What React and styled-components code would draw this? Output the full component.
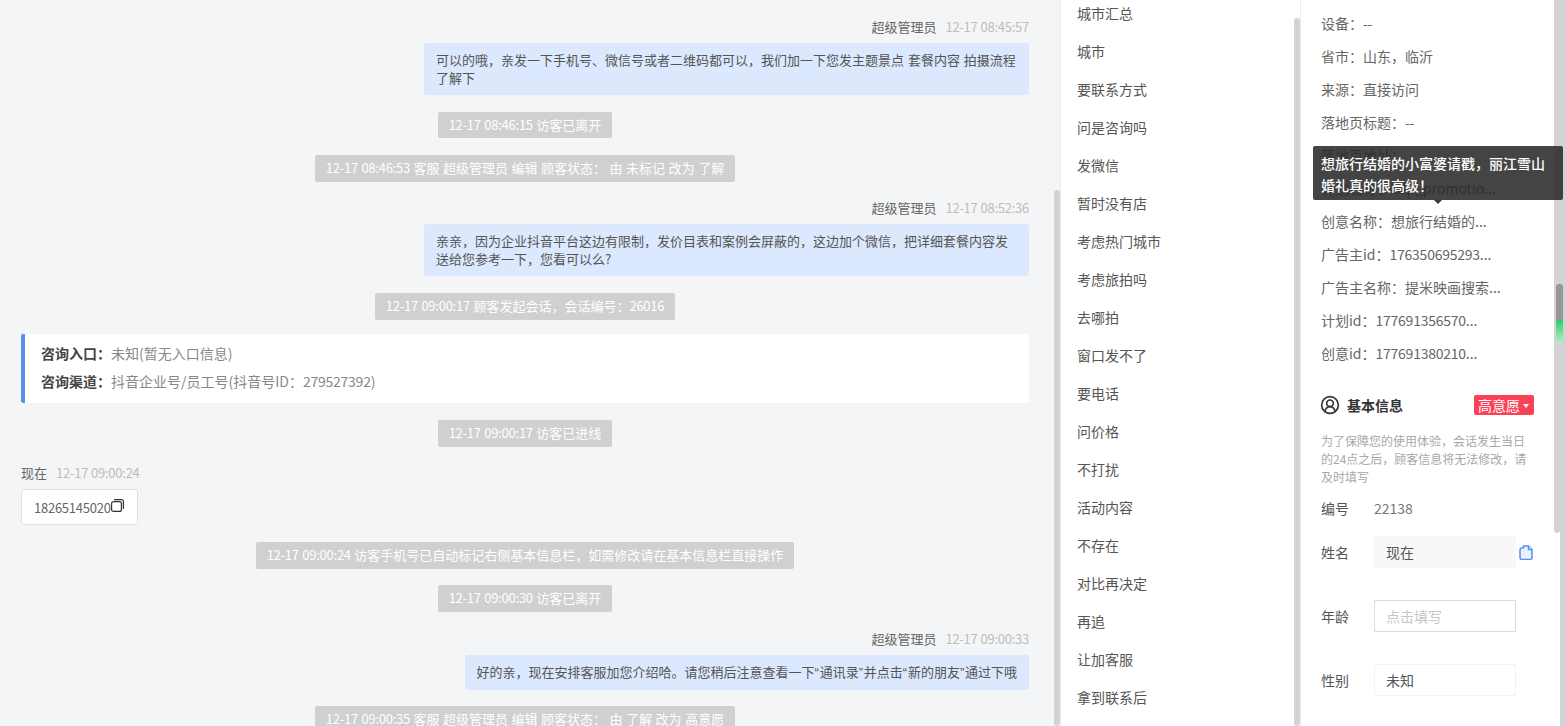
import React from "react";
import styled, { createGlobalStyle } from "styled-components";
import { CircleUserRound } from "lucide-react";

const GlobalStyle = createGlobalStyle`
    html, body {
        margin: 0;
        height: 100%;
        overflow: hidden;
        background: #fff;
    }
    body {
        font-family: "Noto Sans CJK SC", "Noto Sans", sans-serif;
        font-size: 13px;
        color: #555;
    }
`

const Page = styled.div`
    position: relative;
    display: flex;
    width: 1566px;
    height: 726px;
    overflow: hidden;
`

const Num = styled.span`
    letter-spacing: -0.25px;
`

const Quote = styled.span`
    font-family: "Liberation Sans", sans-serif;
    letter-spacing: 0.75px;
`

const ScrollTrack = styled.div`
    flex: none;
    width: 6px;
    height: 100%;
    padding-top: ${p => p.$top}px;
    box-sizing: border-box;
    background: ${p => p.$bg || "transparent"};
`

const ScrollThumb = styled.div`
    height: ${p => p.$height ? `${p.$height}px` : "100%"};
    background: #d3d3d3;
    border-radius: ${p => p.$radius || "3px"};
`

/* chat */
const Chat = styled.div`
    flex: none;
    width: 1054px;
    height: 100%;
    box-sizing: border-box;
    padding: 17px 25px 0 21px;
    overflow: hidden;
    background: #f4f5f7;
    display: flex;
    flex-direction: column;
    gap: 16.75px;

    & > * {
        flex: none;
    }
`

const Group = styled.div`
    margin-top: 1px;
    display: flex;
    flex-direction: column;
    align-items: ${p => p.$left ? "flex-start" : "flex-end"};
    gap: 7px;
`

const Meta = styled.div`
    display: flex;
    gap: 9px;
    height: 18px;
    line-height: 18px;
    color: #666;
`

const Time = styled.span`
    color: #bdbdbd;
`

const Bubble = styled.div`
    max-width: 605px;
    box-sizing: border-box;
    padding: 8px 12px;
    line-height: 18px;
    word-spacing: 1px;
    background: #dbe8fd;
    border-radius: 3px;
    color: #555;
`

const Notice = styled.div`
    align-self: center;
    height: 26.5px;
    line-height: 26.5px;
    padding: 0 11px;
    background: #d0d0d0;
    border-radius: 2px;
    color: #fff;
    word-spacing: 0.6px;
    white-space: nowrap;
`

const SourceCard = styled.div`
    height: 69px;
    margin-top: -2px;
    box-sizing: border-box;
    padding: 2px 16px 6px;
    background: #fff;
    border-left: 4px solid #5590ea;
    border-radius: 2px;
    display: flex;
    flex-direction: column;
    justify-content: center;
    gap: 10px;
    font-size: 14px;
    line-height: 18px;
    color: #888;
`

const SourceLabel = styled.b`
    font-weight: 700;
    color: #444;
`

const PhoneBox = styled.div`
    display: flex;
    align-items: center;
    height: 36px;
    width: 117px;
    box-sizing: border-box;
    padding-left: 12px;
    background: #fff;
    border: 1px solid #dcdfe6;
    border-radius: 3px;
    color: #666;
`

const PhoneCopy = styled.svg`
    width: 13px;
    height: 13px;
    margin-top: -3px;
    fill: none;
    stroke: #333;
    stroke-width: 1.2;
`

/* quick replies */
const Divider = styled.div`
    flex: none;
    width: 1px;
    background: #ececec;
`

const ReplyList = styled.div`
    flex: none;
    width: 233px;
    margin-top: -6px;
    padding-left: 16px;
    box-sizing: border-box;
    background: #fff;
`

const ReplyItem = styled.div`
    height: 38px;
    line-height: 38px;
    font-size: 14px;
    color: #555;
`

/* customer info */
const Info = styled.div`
    flex: none;
    width: 253px;
    height: 100%;
    box-sizing: border-box;
    padding: 7px 20px 0;
    background: #fff;
    font-size: 14px;
`

const InfoRow = styled.div`
    height: 33px;
    line-height: 33px;
    white-space: nowrap;
    color: #666;
`

const SectionHead = styled.div`
    display: flex;
    align-items: center;
    height: 20px;
    margin-top: 25px;
`

const SectionIcon = styled(CircleUserRound)`
    flex: none;
    margin-left: -1px;
`

const SectionTitle = styled.div`
    flex: 1;
    margin-left: 7px;
    font-weight: 700;
    color: #333;
`

const IntentChip = styled.div`
    display: flex;
    align-items: center;
    gap: 3px;
    height: 20px;
    padding: 0 5px 0 4px;
    background: #fb4155;
    border-radius: 2px;
    color: #fff;
`

const Caret = styled.span`
    width: 0;
    height: 0;
    margin-top: 1px;
    border: 3px solid transparent;
    border-top: 4px solid #fff;
    border-bottom: 0;
`

const Hint = styled.div`
    margin-top: 17px;
    width: 213px;
    font-size: 12px;
    line-height: 18px;
    color: #a8a8a8;
`

const Field = styled.div`
    display: flex;
    align-items: center;
    height: 32px;
    margin-top: ${p => p.$gap}px;
`

const FieldLabel = styled.div`
    flex: none;
    width: 53px;
    color: #555;
`

const FieldValue = styled.div`
    color: #777;
`

const FieldBox = styled.div`
    flex: none;
    width: 142px;
    height: 32px;
    line-height: 30px;
    box-sizing: border-box;
    padding-left: 11px;
    border: 1px solid ${p => p.$line};
    background: ${p => p.$bg || "#fff"};
    color: ${p => p.$muted ? "#c6c6c6" : "#555"};
`

const DocCopy = styled.svg`
    flex: none;
    width: 14px;
    height: 15px;
    margin-left: 3px;
    fill: #eaf1fd;
    stroke: #5590ea;
    stroke-width: 1.5;
`

/* overlays */
const Tooltip = styled.div`
    position: absolute;
    left: 1313px;
    top: 146px;
    width: 250px;
    height: 54px;
    box-sizing: border-box;
    padding: 5.5px 8px;
    background: rgba(40, 40, 40, 0.87);
    border-radius: 2px;
    font-size: 14px;
    font-weight: 500;
    line-height: 22px;
    color: #fff;

    &::after {
        content: "";
        position: absolute;
        left: 121px;
        bottom: -4px;
        border: 4px solid transparent;
        border-top: 4px solid #3a3a3a;
        border-bottom: 0;
    }
`

const MiniThumb = styled.div`
    position: absolute;
    left: 1556px;
    top: 284px;
    width: 7px;
    height: 59px;
    border-radius: 3px;
    background: linear-gradient(#979797 0, #979797 36px, #2ecb6b 36px, #b6eec9 100%);
`

const replies = ["城市汇总", "城市", "要联系方式", "问是咨询吗", "发微信", "暂时没有店", "考虑热门城市", "考虑旅拍吗", "去哪拍", "窗口发不了", "要电话", "问价格", "不打扰", "活动内容", "不存在", "对比再决定", "再追", "让加客服", "拿到联系后"];

const details = ["设备：--", "省市：山东，临沂", "来源：直接访问", "落地页标题：--", "落地页地址：", "计划名称：cdp_promotio...", "创意名称：想旅行结婚的...", "广告主id：176350695293...", "广告主名称：提米映画搜索...", "计划id：177691356570...", "创意id：177691380210..."];

// digits and curly quotes run narrower than the CJK font gives them
function Txt({ children }) {
    return children.split(/([\d:-]+|[“”])/).map((part, i) => {
        if (i % 2 === 0) return part;
        return /[“”]/.test(part) ? <Quote key={i}>{part}</Quote> : <Num key={i}>{part}</Num>;
    });
}

function Sent({ time, children }) {
    return (
        <Group>
            <Meta>超级管理员<Time><Txt>{time}</Txt></Time></Meta>
            <Bubble><Txt>{children}</Txt></Bubble>
        </Group>
    );
}

function App() {
    return (
        <Page>
            <GlobalStyle />
            <Chat>
                <Sent time="12-17 08:45:57">可以的哦，亲发一下手机号、微信号或者二维码都可以，我们加一下您发主题景点 套餐内容 拍摄流程了解下</Sent>
                <Notice><Txt>12-17 08:46:15 访客已离开</Txt></Notice>
                <Notice><Txt>12-17 08:46:53 客服 超级管理员 编辑 顾客状态： 由 未标记 改为 了解</Txt></Notice>
                <Sent time="12-17 08:52:36">亲亲，因为企业抖音平台这边有限制，发价目表和案例会屏蔽的，这边加个微信，把详细套餐内容发送给您参考一下，您看可以么?</Sent>
                <Notice><Txt>12-17 09:00:17 顾客发起会话，会话编号：26016</Txt></Notice>
                <SourceCard>
                    <div><SourceLabel>咨询入口：</SourceLabel>未知(暂无入口信息)</div>
                    <div><SourceLabel>咨询渠道：</SourceLabel><Txt>抖音企业号/员工号(抖音号ID：279527392)</Txt></div>
                </SourceCard>
                <Notice><Txt>12-17 09:00:17 访客已进线</Txt></Notice>
                <Group $left>
                    <Meta>现在<Time><Txt>12-17 09:00:24</Txt></Time></Meta>
                    <PhoneBox>
                        <Txt>18265145020</Txt>
                        <PhoneCopy viewBox="0 0 13 13">
                            <rect x="0.6" y="2.6" width="9.8" height="9.8" rx="2" />
                            <path d="M3 .6h7.4a2 2 0 0 1 2 2V10" />
                        </PhoneCopy>
                    </PhoneBox>
                </Group>
                <Notice><Txt>12-17 09:00:24 访客手机号已自动标记右侧基本信息栏，如需修改请在基本信息栏直接操作</Txt></Notice>
                <Notice><Txt>12-17 09:00:30 访客已离开</Txt></Notice>
                <Sent time="12-17 09:00:33">好的亲，现在安排客服加您介绍哈。请您稍后注意查看一下“通讯录”并点击“新的朋友”通过下哦</Sent>
                <Notice><Txt>12-17 09:00:35 客服 超级管理员 编辑 顾客状态： 由 了解 改为 高意愿</Txt></Notice>
            </Chat>
            <ScrollTrack $top={190} $bg="#f4f5f7"><ScrollThumb /></ScrollTrack>
            <Divider />
            <ReplyList>
                {replies.map(item => <ReplyItem key={item}>{item}</ReplyItem>)}
            </ReplyList>
            <ScrollTrack $top={18}><ScrollThumb /></ScrollTrack>
            <Divider />
            <Info>
                {details.map(item => <InfoRow key={item}><Txt>{item}</Txt></InfoRow>)}
                <SectionHead>
                    <SectionIcon size={20} color="#333" strokeWidth={2} />
                    <SectionTitle>基本信息</SectionTitle>
                    <IntentChip>高意愿<Caret /></IntentChip>
                </SectionHead>
                <Hint>为了保障您的使用体验，会话发生当日的24点之后，顾客信息将无法修改，请及时填写</Hint>
                <Field $gap={6}>
                    <FieldLabel>编号</FieldLabel>
                    <FieldValue>22138</FieldValue>
                </Field>
                <Field $gap={12}>
                    <FieldLabel>姓名</FieldLabel>
                    <FieldBox $line="#f8f8f8" $bg="#f8f8f8">现在</FieldBox>
                    <DocCopy viewBox="0 0 14 15">
                        <path d="M4.5 1h5l3.5 3.5V11a2 2 0 0 1-2 2H4.5z" />
                        <path d="M9.5 1v3.5H13" />
                        <path d="M4.5 3H3a2 2 0 0 0-2 2v7.6A1.8 1.8 0 0 0 2.8 14.4H11a2 2 0 0 0 2-2V11" />
                    </DocCopy>
                </Field>
                <Field $gap={32}>
                    <FieldLabel>年龄</FieldLabel>
                    <FieldBox $line="#dcdcdc" $muted>点击填写</FieldBox>
                </Field>
                <Field $gap={32}>
                    <FieldLabel>性别</FieldLabel>
                    <FieldBox $line="#f2f2f2">未知</FieldBox>
                </Field>
            </Info>
            <ScrollTrack $top={0}>
                <ScrollThumb $height={533} $radius="0 0 3px 3px" />
            </ScrollTrack>
            <ScrollTrack $top={0}><ScrollThumb $radius="0" /></ScrollTrack>
            <Tooltip>想旅行结婚的小富婆请戳，丽江雪山婚礼真的很高级！</Tooltip>
            <MiniThumb />
        </Page>
    );
}

export default App;
